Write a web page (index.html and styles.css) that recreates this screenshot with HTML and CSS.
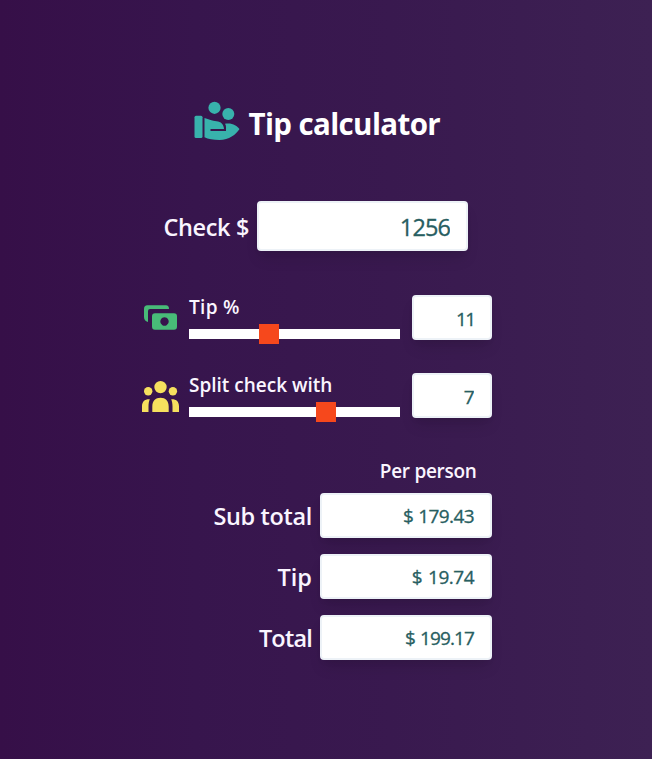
FILE: index.html
```html
<!DOCTYPE html>
<html lang="en">
<head>
<meta charset="utf-8">
<title>Tip calculator</title>
<link rel="stylesheet" href="styles.css">
</head>
<body>
<main class="calculator">
  <header class="title">
    <svg class="title-icon" viewBox="0 0 46 40" aria-hidden="true">
      <circle cx="20.5" cy="6.8" r="6.1"/><circle cx="34.3" cy="12.9" r="6"/>
      <rect x="0.5" y="14.8" width="8" height="22.2" rx="1.5"/>
      <path d="M10.5 17C15 18.500 18 20 22.500 20.300c4.500.300 7 3 7.500 7.700H16.500v2H32v-4q0-1.800-1-3.300C38 21.500 43 24.500 45.500 28 42 33.500 35 39 25.500 39 19.500 39 14 38 10.500 36.300z"/>
    </svg>
    <h1>Tip calculator</h1>
  </header>
  <div class="check">
    <label for="check" class="large">Check $</label>
    <input class="box check-box" id="check" value="1256">
  </div>
  <div class="slider-row tip-row">
    <svg class="row-icon money" viewBox="0 0 38 45" aria-hidden="true">
      <path d="M5.500 10.300H24q3 0 3 3.700H8Q6 14 6 16V27Q2 26 2 22V14Q2 10.300 5.500 10.300Z"/>
      <path fill-rule="evenodd" d="M13 18.300H32Q35 18.300 35 21.300V31.500Q35 34.700 32 34.700H13Q10 34.700 10 31.500V21.300Q10 18.300 13 18.300ZM22.500 22.300a4.200 4.200 0 1 0 .001 0z"/>
    </svg>
    <div class="slider-field">
      <label for="tip" class="tip-label">Tip %</label>
      <input type="range" id="tip" min="0" max="30" value="11">
    </div>
    <input class="box small-box narrow" value="11" aria-label="Tip percent">
  </div>
  <div class="slider-row">
    <svg class="row-icon people" viewBox="0 0 38 45" aria-hidden="true">
      <circle cx="18.500" cy="14.100" r="6.200"/><circle cx="6.200" cy="18.300" r="4.200"/><circle cx="30.900" cy="18.300" r="4.200"/>
      <path d="M10.300 39V33.500C10.300 28 13.500 24.800 18.500 24.800S26.700 28 26.700 33.500V39ZM0 39V33.500C0 28.500 2.500 26 7.800 26.200 7 28 6.500 30.500 6.500 33.500V39ZM37 39V33.500C37 28.500 34.500 26 29.200 26.200 30 28 30.500 30.500 30.500 33.500V39Z"/>
    </svg>
    <div class="slider-field">
      <label for="split">Split check with</label>
      <input type="range" id="split" min="1" max="10" value="7">
    </div>
    <input class="box small-box" value="7" aria-label="People">
  </div>
  <section class="results">
    <h2>Per person</h2>
    <div class="result"><span class="large">Sub total</span><output class="box">$ 179.43</output></div>
    <div class="result"><span class="large tip-result">Tip</span><output class="box tip-value">$ 19.74</output></div>
    <div class="result"><span class="large total-label">Total</span><output class="box total-value">$ 199.17</output></div>
  </section>
</main>
</body>
</html>
```
FILE: styles.css
```css
* { box-sizing: border-box; }
body {
  margin: 0;
  min-height: 100vh;
  background: linear-gradient(90deg, #360f48 0%, #37154d 30%, #39194f 60%, #3d2153 100%);
  color: #faf5ff;
  font-family: "Segoe UI", "Open Sans", "Noto Sans", sans-serif;
  font-size: 19px;
  font-weight: 600;
}
.calculator { width: 350px; margin-left: 142px; padding-top: 101px; }
.title { display: flex; height: 40px; margin-left: 51.5px; }
.title-icon { width: 46px; height: 40px; fill: #38b2ac; flex: none; }
h1 { margin: 0 0 0 9px; font-size: 29.5px; line-height: 45px; font-weight: 700; letter-spacing: -.62px; color: #fff; white-space: nowrap; }
.check { display: flex; align-items: center; justify-content: flex-end; gap: 8px; height: 50px; margin: 60px 24px 0 0; }
.large { font-size: 23.5px; white-space: nowrap; line-height: 34px; letter-spacing: -.35px; }
.check .large { padding-top: 2px; }
.tip-result { letter-spacing: 0; }
.total-label { letter-spacing: -.8px; }
.box {
  height: 45px;
  padding: 2px 16px 0;
  border: 2px solid #edf2f7;
  border-radius: 4px;
  background: #fff;
  box-shadow: 0 10px 15px -3px rgba(0,0,0,.1), 0 4px 6px -2px rgba(0,0,0,.05);
  color: #285e61;
  font: 500 19px/39px "Segoe UI", "Open Sans", "Noto Sans", sans-serif;
  letter-spacing: -.5px;
  text-align: right;
  -webkit-text-stroke: .3px #285e61;
}
.check-box { width: 211px; height: 50px; font-size: 23.5px; line-height: 44px; letter-spacing: -.9px; }
.slider-row { display: flex; height: 45px; margin-top: 33px; }
.tip-row { margin-top: 44px; }
.row-icon { width: 38px; height: 45px; flex: none; }
.money { fill: #48bb78; }
.people { fill: #f6e05e; }
.slider-field { display: flex; flex-direction: column; width: 211px; margin: 0 12px 0 9px; }
.slider-field label { height: 34px; line-height: 25px; white-space: nowrap; }
.slider-field .tip-label { letter-spacing: .3px; }
input[type="range"] { appearance: none; width: 100%; height: 10px; margin: 0; background: #fff; }
input[type="range"]::-webkit-slider-thumb { appearance: none; width: 20px; height: 20px; background: #f6481c; border-radius: 0; }
.small-box { width: 80px; }
.narrow { letter-spacing: -1.6px; padding-right: 15.5px; }
.results { margin-top: 40px; }
h2 { margin: 0 15.5px 9px; font-size: 19px; line-height: 26px; font-weight: 600; letter-spacing: -.3px; text-align: right; }
.result { display: flex; align-items: center; justify-content: flex-end; gap: 8px; height: 45px; margin-bottom: 16px; }
.result .box { width: 172px; letter-spacing: -.6px; word-spacing: .8px; line-height: 39px; }
.result .tip-value { letter-spacing: -.5px; word-spacing: 1.5px; }
.result .total-value { letter-spacing: -.9px; word-spacing: 1px; }
```
